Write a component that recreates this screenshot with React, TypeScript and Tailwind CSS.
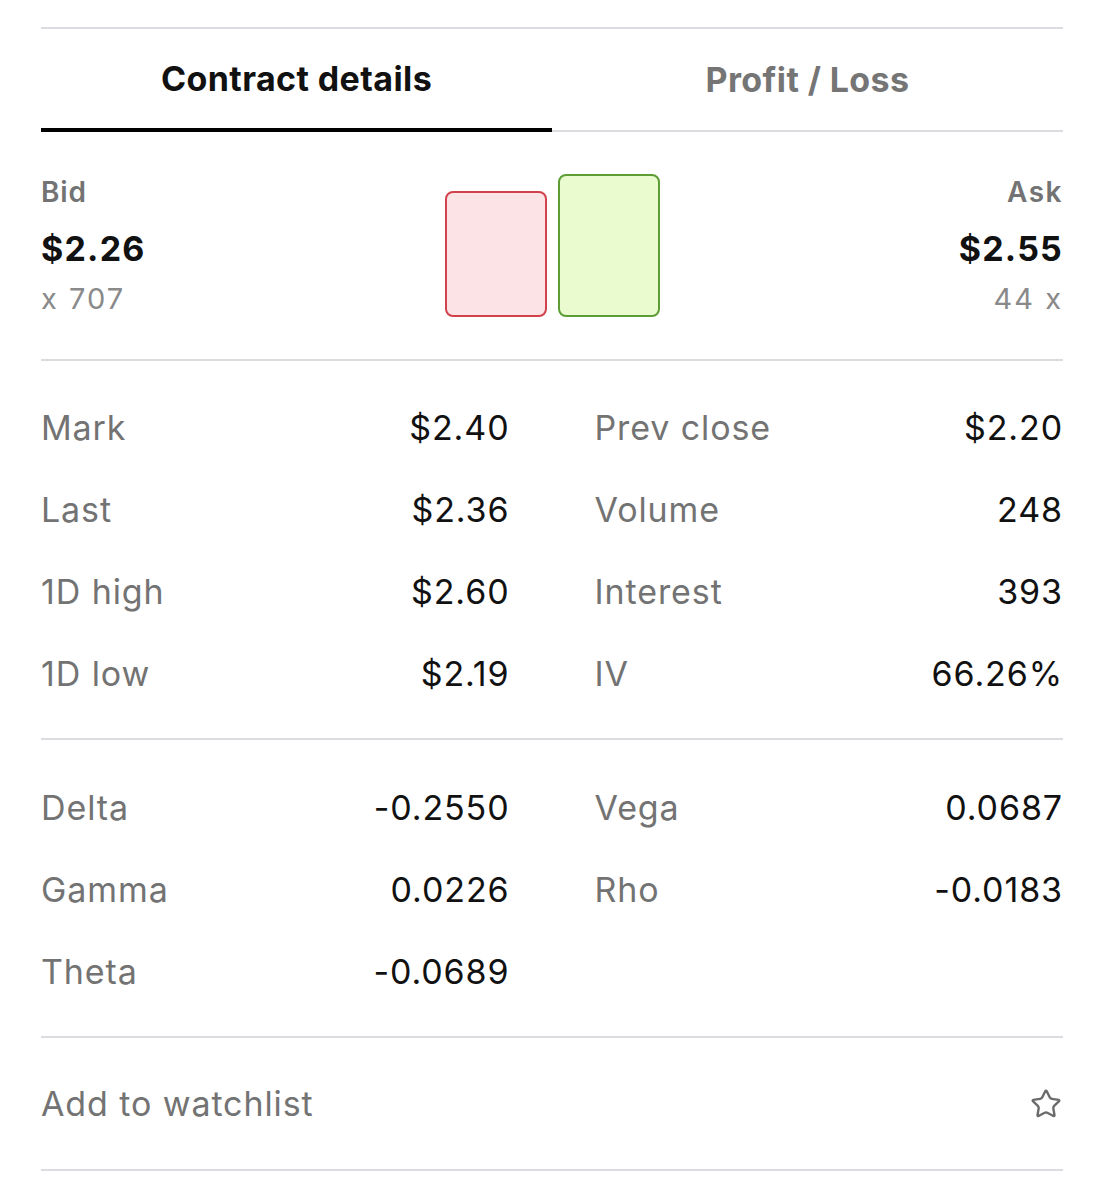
import React from 'react';
import { Star } from 'lucide-react';

const stats = [
  ['Mark', '$2.40', 'Prev close', '$2.20'],
  ['Last', '$2.36', 'Volume', '248'],
  ['1D high', '$2.60', 'Interest', '393'],
  ['1D low', '$2.19', 'IV', '66.26%'],
];

const greeks = [
  ['Delta', '-0.2550', 'Vega', '0.0687'],
  ['Gamma', '0.0226', 'Rho', '-0.0183'],
  ['Theta', '-0.0689', '', ''],
];

function Cell({ label, value }: { label: string; value: string }) {
  return (
    <div className="flex h-[82px] items-center justify-between">
      <span className="text-[#737373]">{label}</span>
      <span className="text-[#111]">{value}</span>
    </div>
  );
}

function Rows({ rows }: { rows: string[][] }) {
  return (
    <div className="grid grid-cols-2 gap-x-[85px]">
      {rows.map(([l1, v1, l2, v2]) => (
        <React.Fragment key={l1}>
          <Cell label={l1} value={v1} />
          {l2 ? <Cell label={l2} value={v2} /> : <div />}
        </React.Fragment>
      ))}
    </div>
  );
}

export default function App() {
  return (
    <div
      className="min-h-[1200px] bg-white px-[41px] pt-[27px] text-[34px] tracking-[0.9px]"
      style={{ fontFamily: 'Inter, "Noto Sans", sans-serif' }}
    >
      <div className="border-t-2 border-[#dcdce0]">
        {/* tabs */}
        <div className="grid grid-cols-2 border-b-2 border-[#dcdce0]">
          <div className="-mb-[2px] flex h-[103px] items-center justify-center border-b-4 border-black font-bold tracking-[0.4px] text-[#111]">
            Contract details
          </div>
          <div className="flex h-[101px] items-center justify-center font-bold tracking-[0.4px] text-[#757575]">
            Profit / Loss
          </div>
        </div>

        {/* bid / ask */}
        <div className="flex items-start justify-between border-b-2 border-[#dcdce0] pt-[43px] pb-[42px]">
          <div className="pt-[2px]">
            <div className="h-[30px] text-[28px] leading-[30px] font-semibold tracking-[0.8px] text-[#737373]">Bid</div>
            <div className="mt-[20px] h-[44px] leading-[44px] font-bold tracking-[1.2px] text-[#111]">$2.26</div>
            <div className="mt-[10px] h-[36px] text-[29px] leading-[36px] tracking-[2px] text-[#8a8a8a]">x 707</div>
          </div>
          <div className="flex h-[142px] items-end gap-[11px]">
            <div className="h-[126px] w-[102px] rounded-[8px] border-2 border-[#d2424c] bg-[#fbe3e6]" />
            <div className="h-[143px] w-[102px] rounded-[8px] border-2 border-[#5c9e34] bg-[#e9fbcf]" />
          </div>
          <div className="pt-[2px] text-right">
            <div className="h-[30px] text-[28px] leading-[30px] font-semibold tracking-[1.5px] text-[#737373]">Ask</div>
            <div className="mt-[20px] h-[44px] leading-[44px] font-bold tracking-[1.2px] text-[#111]">$2.55</div>
            <div className="mt-[10px] h-[36px] text-[29px] leading-[36px] tracking-[2px] text-[#8a8a8a]">44 x</div>
          </div>
        </div>

        {/* stats */}
        <div className="border-b-2 border-[#dcdce0] pt-[25px] pb-[24px]">
          <Rows rows={stats} />
        </div>

        {/* greeks */}
        <div className="border-b-2 border-[#dcdce0] pt-[26px] pb-[24px]">
          <Rows rows={greeks} />
        </div>

        {/* watchlist */}
        <div className="flex h-[133px] items-center justify-between border-b-2 border-[#dcdce0]">
          <span className="text-[#737373]">Add to watchlist</span>
          <Star className="mr-[1px] h-[32px] w-[32px] text-[#6b6b6b]" strokeWidth={1.8} />
        </div>
      </div>
    </div>
  );
}
